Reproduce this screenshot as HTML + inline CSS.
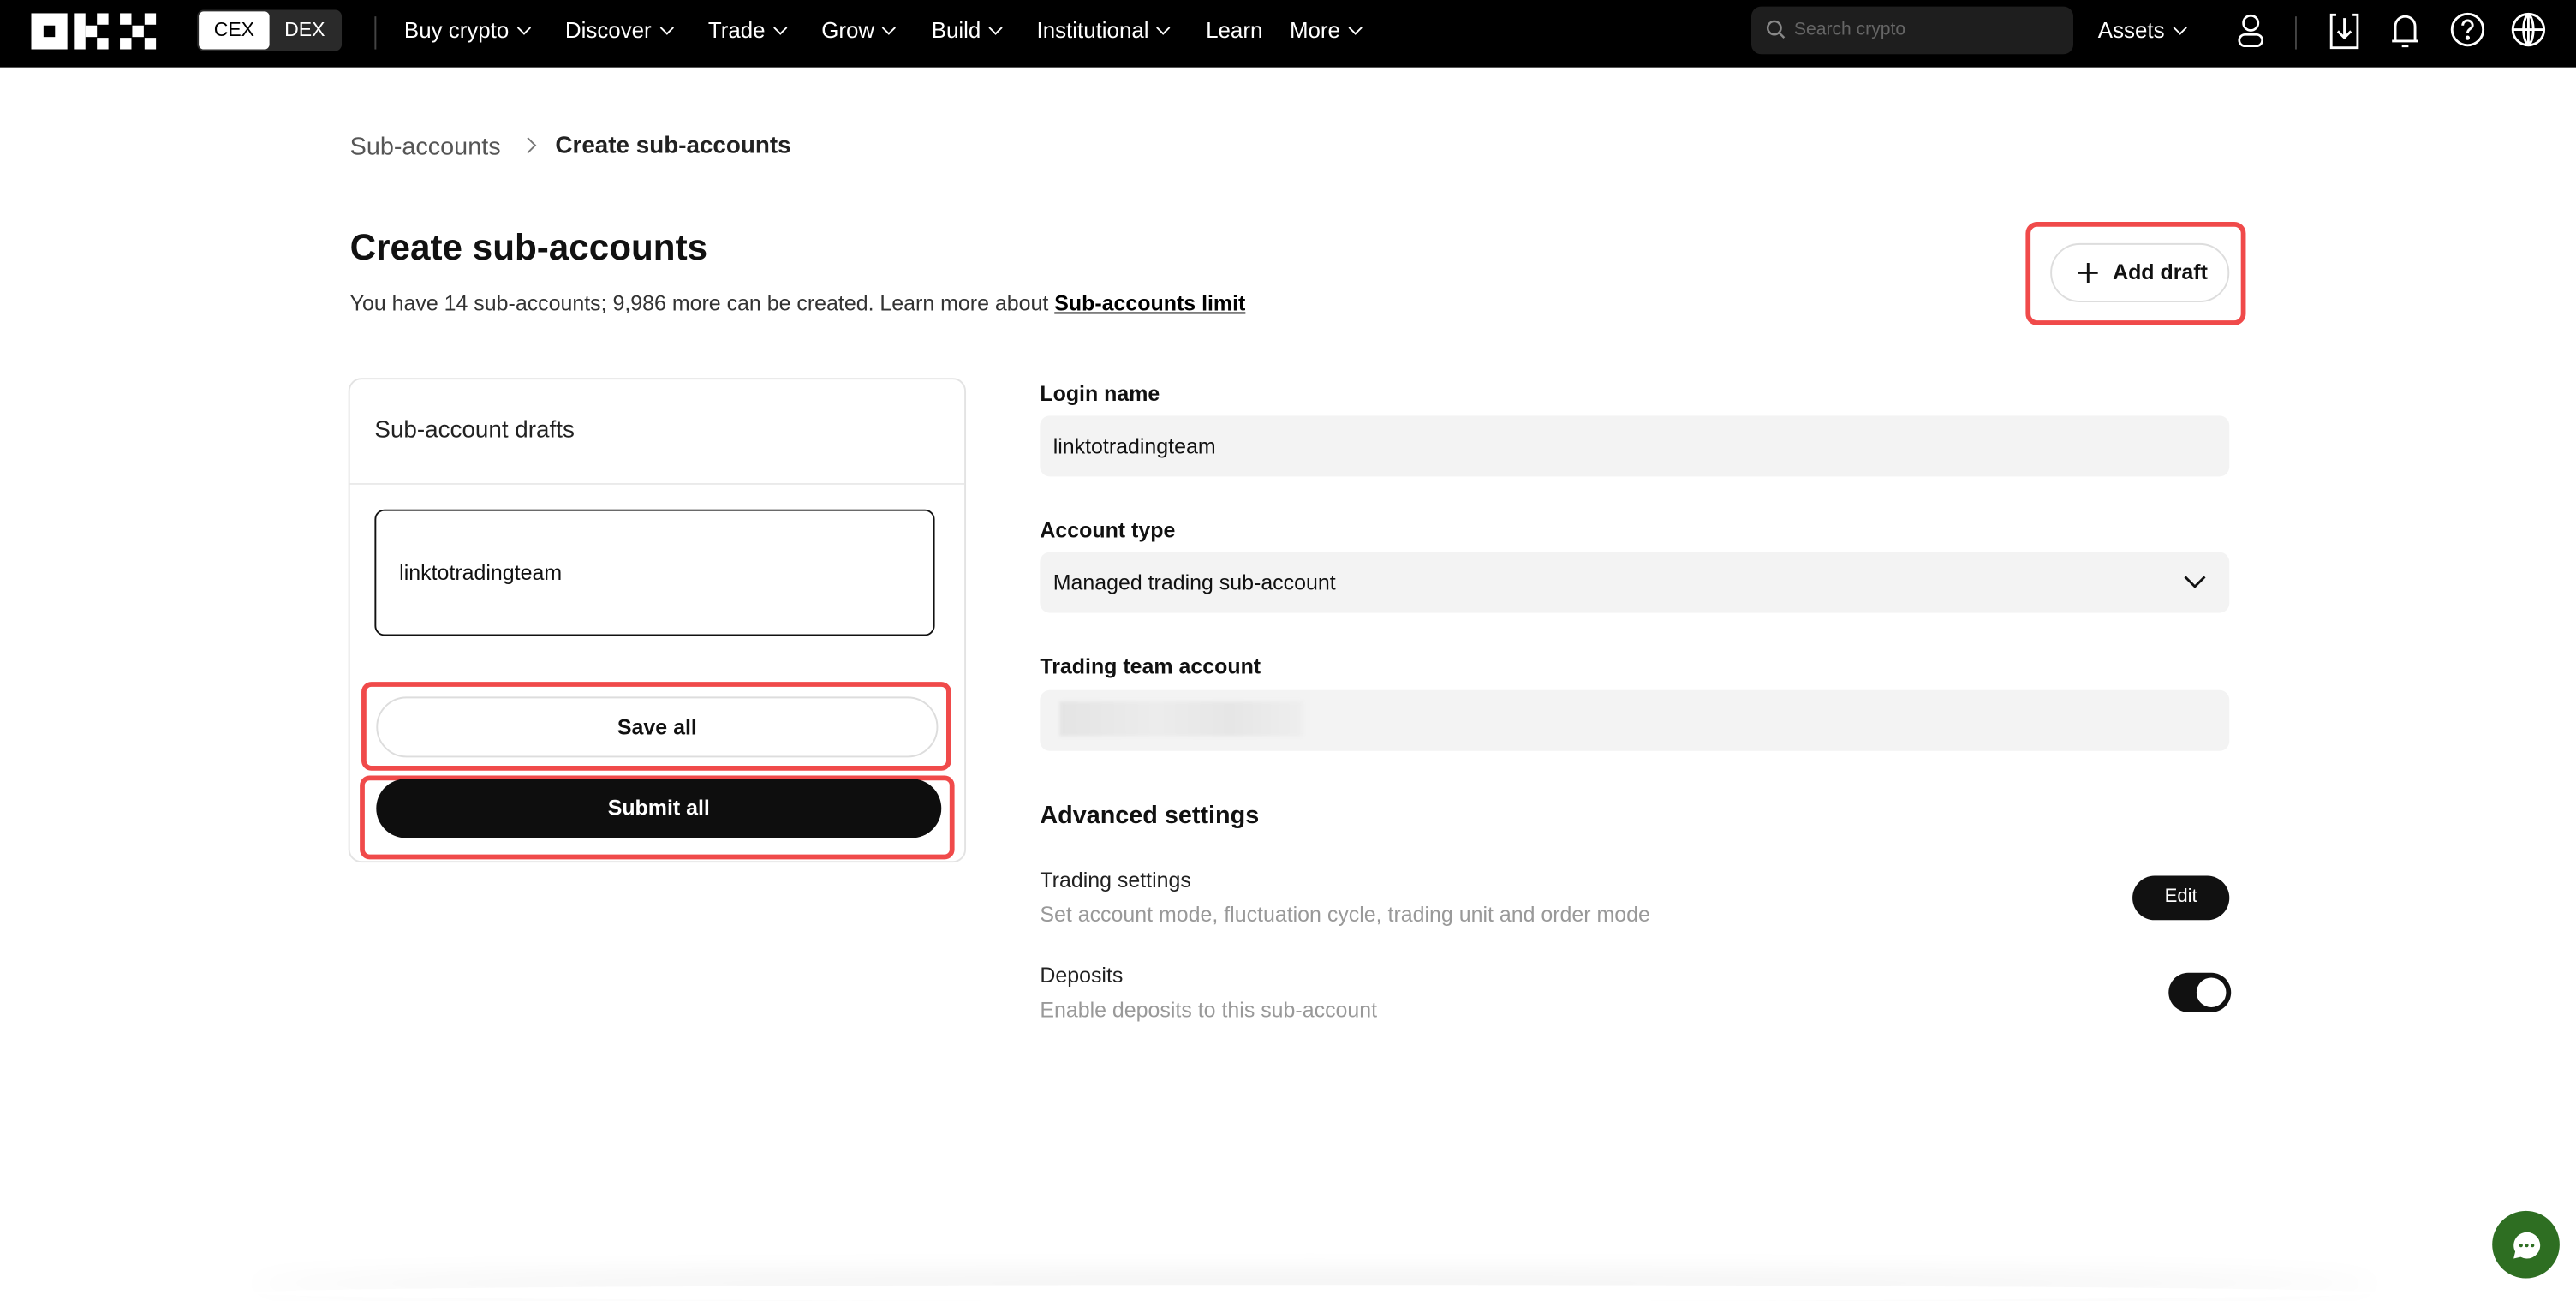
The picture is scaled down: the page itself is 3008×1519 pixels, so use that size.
<!DOCTYPE html>
<html><head><meta charset="utf-8"><style>
html,body{margin:0;padding:0;width:3008px;height:1512px;overflow:hidden;background:#fff}
#w{position:absolute;left:0;top:0;width:1568px;height:788px;transform:scale(1.9184);transform-origin:0 0;font-family:"Liberation Sans",sans-serif;color:#111}
.a{position:absolute;white-space:nowrap}
.nav{position:absolute;left:0;top:0;width:1568px;height:41px;background:#000}
.nv{position:absolute;top:11px;color:#fff;font-size:13.5px}
.nv i{display:inline-block;width:5px;height:5px;border-right:1.2px solid #fff;border-bottom:1.2px solid #fff;transform:rotate(45deg);margin-left:6px;position:relative;top:-3px}
.lbl{font-size:13px;font-weight:bold}
.inp{position:absolute;left:633px;width:724px;height:37px;background:#f3f3f3;border-radius:6px}
.red{position:absolute;border:3.5px solid #f04a4a;border-radius:6px;box-sizing:border-box}
</style></head><body><div id="w">
<div class="nav">
 <svg class="a" style="left:19px;top:8px" width="76" height="22" viewBox="0 0 76 22" fill="#fff">
  <rect x="0" y="0" width="22" height="22"/><rect x="7.5" y="7.5" width="7" height="7" fill="#000"/>
  <rect x="26" y="0" width="7" height="22"/><rect x="33" y="7.5" width="7" height="7"/><rect x="40" y="0" width="7" height="7"/><rect x="40" y="15" width="7" height="7"/>
  <rect x="54" y="0" width="7" height="7"/><rect x="69" y="0" width="7" height="7"/><rect x="61.5" y="7.5" width="7" height="7"/><rect x="54" y="15" width="7" height="7"/><rect x="69" y="15" width="7" height="7"/>
 </svg>
 <div class="a" style="left:120px;top:6px;width:88px;height:25px;border-radius:4px;background:#2a2a2a"></div>
 <div class="a" style="left:121px;top:7px;width:43px;height:23px;border-radius:3px;background:#fff;color:#000;font-size:12px;text-align:center;line-height:23px">CEX</div>
 <div class="a" style="left:164px;top:7px;width:43px;height:23px;color:#fff;font-size:12px;text-align:center;line-height:23px">DEX</div>
 <div class="a" style="left:228px;top:10px;width:1px;height:20px;background:#444"></div>
 <div class="nv" style="left:246px">Buy crypto<i></i></div>
 <div class="nv" style="left:344px">Discover<i></i></div>
 <div class="nv" style="left:431px">Trade<i></i></div>
 <div class="nv" style="left:500px">Grow<i></i></div>
 <div class="nv" style="left:567px">Build<i></i></div>
 <div class="nv" style="left:631px">Institutional<i></i></div>
 <div class="nv" style="left:734px">Learn</div>
 <div class="nv" style="left:785px">More<i></i></div>
 <div class="a" style="left:1066px;top:4px;width:196px;height:29px;border-radius:6px;background:#1e1e1e"></div>
 <svg class="a" style="left:1075px;top:12px" width="12" height="12" viewBox="0 0 12 12" fill="none" stroke="#888" stroke-width="1.3"><circle cx="5" cy="5" r="4"/><path d="M8 8l3 3"/></svg>
 <div class="a" style="left:1092px;top:12px;font-size:11px;color:#666">Search crypto</div>
 <div class="nv" style="left:1277px">Assets<i></i></div>
 <svg class="a" style="left:1360px;top:8px" width="20" height="22" viewBox="0 0 20 22" fill="none" stroke="#fff" stroke-width="1.4"><circle cx="10" cy="6" r="4.5"/><rect x="3" y="13" width="14" height="7" rx="3.5"/></svg>
 <div class="a" style="left:1397px;top:10px;width:1px;height:20px;background:#444"></div>
 <svg class="a" style="left:1417px;top:7px" width="20" height="24" viewBox="0 0 20 24" fill="none" stroke="#fff" stroke-width="1.5"><path d="M5 2H2v20h16V2h-3M10 4v12M6 12l4 4 4-4"/></svg>
 <svg class="a" style="left:1454px;top:7px" width="20" height="24" viewBox="0 0 20 24" fill="none" stroke="#fff" stroke-width="1.5"><path d="M4 18V9a6 6 0 0112 0v9zM2 18h16M8 21h4"/></svg>
 <svg class="a" style="left:1491px;top:7px" width="22" height="22" viewBox="0 0 22 22" fill="none" stroke="#fff" stroke-width="1.5"><circle cx="11" cy="11" r="9.5"/><path d="M8 8.5a3 3 0 116 0c0 2-3 2-3 4.5"/><circle cx="11" cy="16" r=".6" fill="#fff"/></svg>
 <svg class="a" style="left:1528px;top:7px" width="22" height="22" viewBox="0 0 22 22" fill="none" stroke="#fff" stroke-width="1.5"><circle cx="11" cy="11" r="9.5"/><path d="M1.5 11h19M11 1.5v19M11 1.5c-4 3-4 16 0 19M11 1.5c4 3 4 16 0 19"/></svg>
</div>

<div class="a" style="left:213px;top:81px;font-size:15px;color:#555">Sub-accounts</div>
<div class="a" style="left:318px;top:85px;width:6px;height:6px;border-right:1.2px solid #777;border-top:1.2px solid #777;transform:rotate(45deg)"></div>
<div class="a" style="left:338px;top:81px;font-size:14.5px;font-weight:bold;color:#222">Create sub-accounts</div>
<div class="a" style="left:213px;top:138px;font-size:22px;font-weight:bold">Create sub-accounts</div>
<div class="a" style="left:213px;top:177px;font-size:13px;color:#333">You have 14 sub-accounts; 9,986 more can be created. Learn more about <span style="color:#000;font-weight:bold;text-decoration:underline">Sub-accounts limit</span></div>
<div class="red" style="left:1233px;top:135px;width:134px;height:63px;border-radius:7px"></div>
<div class="a" style="left:1248px;top:148px;width:109px;height:36px;border:1px solid #ddd;border-radius:18px;box-sizing:border-box;font-size:13px;line-height:34px;font-weight:bold"><svg style="position:absolute;left:16px;top:11px" width="12" height="12" viewBox="0 0 12 12" stroke="#111" stroke-width="1.5"><path d="M6 0v12M0 6h12"/></svg><span style="position:absolute;left:37px">Add draft</span></div>

<div class="a" style="left:212px;top:230px;width:376px;height:295px;border:1px solid #e3e3e3;border-radius:8px;box-sizing:border-box"></div>
<div class="a" style="left:213px;top:294px;width:374px;height:1px;background:#eaeaea"></div>
<div class="a" style="left:228px;top:254px;font-size:14.5px;color:#222">Sub-account drafts</div>
<div class="a" style="left:228px;top:310px;width:341px;height:77px;border:1px solid #111;border-radius:6px;box-sizing:border-box"></div>
<div class="a" style="left:243px;top:341px;font-size:13px;color:#111">linktotradingteam</div>
<div class="red" style="left:220px;top:415px;width:359px;height:54px"></div>
<div class="a" style="left:229px;top:424px;width:342px;height:37px;border:1px solid #ddd;border-radius:19px;box-sizing:border-box;text-align:center;line-height:35px;font-size:13px;font-weight:bold">Save all</div>
<div class="red" style="left:219px;top:472px;width:362px;height:51px"></div>
<div class="a" style="left:229px;top:474px;width:344px;height:36px;background:#0e0e0e;border-radius:18px;color:#fff;text-align:center;line-height:35px;font-size:13px;font-weight:bold">Submit all</div>

<div class="a lbl" style="left:633px;top:232px">Login name</div>
<div class="inp" style="top:253px"></div>
<div class="a" style="left:641px;top:264px;font-size:13px">linktotradingteam</div>
<div class="a lbl" style="left:633px;top:315px">Account type</div>
<div class="inp" style="top:336px"></div>
<div class="a" style="left:641px;top:347px;font-size:13px">Managed trading sub-account</div>
<svg class="a" style="left:1329px;top:350px" width="14" height="9" viewBox="0 0 14 9" fill="none" stroke="#111" stroke-width="1.5"><path d="M1 1l6 6 6-6"/></svg>
<div class="a lbl" style="left:633px;top:398px">Trading team account</div>
<div class="inp" style="top:420px"></div>
<div class="a" style="left:645px;top:427px;width:148px;height:21px;background:linear-gradient(90deg,#e4e4e4,#ececec 40%,#e6e6e6 70%,#eee);filter:blur(1px)"></div>
<div class="a" style="left:633px;top:488px;font-size:15px;font-weight:bold">Advanced settings</div>
<div class="a" style="left:633px;top:528px;font-size:13px;color:#222">Trading settings</div>
<div class="a" style="left:633px;top:549px;font-size:13px;color:#999">Set account mode, fluctuation cycle, trading unit and order mode</div>
<div class="a" style="left:1298px;top:533px;width:59px;height:27px;background:#111;border-radius:14px;color:#fff;font-size:11.5px;text-align:center;line-height:27px">Edit</div>
<div class="a" style="left:633px;top:586px;font-size:13px;color:#222">Deposits</div>
<div class="a" style="left:633px;top:607px;font-size:13px;color:#999">Enable deposits to this sub-account</div>
<div class="a" style="left:1320px;top:592px;width:38px;height:24px;background:#111;border-radius:12px"></div>
<div class="a" style="left:1337px;top:595px;width:18px;height:18px;background:#fff;border-radius:50%"></div>

<div class="a" style="left:150px;top:782px;width:1300px;height:10px;box-shadow:0 -6px 16px rgba(0,0,0,.08);border-radius:50%"></div>
<div class="a" style="left:1517px;top:737px;width:41px;height:41px;background:#2e6e22;border-radius:50%"></div>
<svg class="a" style="left:1528px;top:748px" width="20" height="20" viewBox="0 0 20 20"><path d="M10 2a8 8 0 00-7 11.8L2 18l4.3-1A8 8 0 1010 2z" fill="#fff"/><circle cx="6.5" cy="10" r="1.1" fill="#2e6e22"/><circle cx="10" cy="10" r="1.1" fill="#2e6e22"/><circle cx="13.5" cy="10" r="1.1" fill="#2e6e22"/></svg>
</div></body></html>
